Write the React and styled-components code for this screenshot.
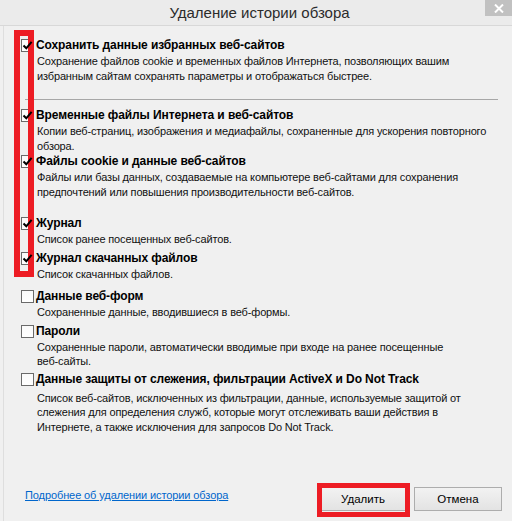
import React from "react";
import styled, { createGlobalStyle } from "styled-components";

const Global = createGlobalStyle`
  html, body { margin: 0; padding: 0; background: #f0f0f0; }
  body { font-family: "Liberation Sans", Arial, sans-serif; }
`;

const Window = styled.div`
  width: 512px;
  height: 521px;
  display: flex;
  flex-direction: column;
  background: #f0f0f0;
  overflow: hidden;
  position: relative;
`;

const TitleBar = styled.div`
  height: 25px;
  background: #ebebeb;
  border-bottom: 1px solid #d8d8d8;
  display: flex;
  align-items: center;
  justify-content: center;
  position: relative;
  flex-shrink: 0;
`;

const Title = styled.div`
  font-family: "Liberation Sans", Arial, sans-serif;
  font-size: 15px;
  color: #2b2b2b;
  padding-left: 7px;
  line-height: 25px;
`;

const CloseButton = styled.div`
  position: absolute;
  top: 0;
  right: 0;
  width: 27px;
  height: 16px;
  background: #c1c1c1;
  display: flex;
  align-items: center;
  justify-content: center;
`;

const Body = styled.div`
  flex: 1;
  display: flex;
  flex-direction: column;
  margin-left: 3px;
  border-left: 1px solid #dedede;
  padding: 11px 10px 10px 17px;
  position: relative;
`;

const Item = styled.div`
  display: flex;
  margin-top: ${(p) => p.$top || 0}px;
`;

const BoxCol = styled.div`
  width: 15px;
  flex-shrink: 0;
  padding-top: 2px;
`;

const Box = styled.div`
  width: 11px;
  height: 11px;
  border: 1px solid #6a6a6a;
  background: linear-gradient(#fafafa, #ffffff);
  display: flex;
  align-items: center;
  justify-content: center;
`;

const Check = styled.svg`
  position: relative;
  z-index: 3;
`;

const TextCol = styled.div`
  display: flex;
  flex-direction: column;
`;

const ItemTitle = styled.div`
  font-size: 12px;
  letter-spacing: -0.1px;
  font-weight: bold;
  color: #000;
  line-height: 16px;
  white-space: nowrap;
`;

const Desc = styled.div`
  font-size: 11px;
  letter-spacing: -0.15px;
  color: #111;
  line-height: 14.5px;
  margin-top: ${(p) => 1 + (p.$extra || 0)}px;
  padding-left: 1px;
  width: ${(p) => p.$width || 470}px;
`;

const Separator = styled.div`
  height: 1px;
  background: #a7a7a7;
  margin: 16px 0 7px 4px;
  width: 473px;
`;

const RedFrame = styled.div`
  position: absolute;
  left: 10px;
  top: 4px;
  width: 8px;
  height: 235px;
  border: 6px solid #ed1c24;
  z-index: 2;
`;

const Footer = styled.div`
  margin-top: auto;
  display: flex;
  align-items: flex-start;
  padding-left: 4px;
`;

const HelpLink = styled.a`
  font-size: 11px;
  letter-spacing: -0.1px;
  color: #0066cc;
  text-decoration: underline;
  line-height: 16px;
  cursor: pointer;
`;

const Buttons = styled.div`
  margin-left: auto;
  display: flex;
  gap: 7px;
`;

const Highlight = styled.div`
  position: relative;
`;

const HighlightFrame = styled.div`
  position: absolute;
  left: -2px;
  right: -3px;
  top: -4px;
  bottom: -6px;
  border: 5px solid #ed1c24;
  pointer-events: none;
`;

const Button = styled.button`
  width: 88px;
  height: 24px;
  border: 1px solid #adadad;
  background: linear-gradient(#f2f2f2, #e3e3e3);
  font-family: "Liberation Sans", Arial, sans-serif;
  font-size: 11.5px;
  color: #000;
  padding: 0;
`;

const CheckMark = () => (
  <Check width="11" height="11" viewBox="0 0 11 11">
    <path d="M1.5 5.5 L4.3 8.3 L9.6 1.8" fill="none" stroke="#000" strokeWidth="2" />
  </Check>
);

const Option = ({ checked, top, title, desc, extra, width }) => (
  <Item $top={top}>
    <BoxCol>
      <Box>{checked && <CheckMark />}</Box>
    </BoxCol>
    <TextCol>
      <ItemTitle>{title}</ItemTitle>
      <Desc $extra={extra} $width={width}>{desc}</Desc>
    </TextCol>
  </Item>
);

export default function App() {
  return (
    <>
      <Global />
      <Window>
        <TitleBar>
          <Title>Удаление истории обзора</Title>
          <CloseButton>
            <svg width="10" height="9" viewBox="0 0 10 9">
              <path d="M1 0.5 L9 8.5 M9 0.5 L1 8.5" stroke="#fff" strokeWidth="2" />
            </svg>
          </CloseButton>
        </TitleBar>
        <Body>
          <RedFrame />
          <Option
            checked
            title="Сохранить данные избранных веб-сайтов"
            desc="Сохранение файлов cookie и временных файлов Интернета, позволяющих вашим избранным сайтам сохранять параметры и отображаться быстрее."
            width={430}
          />
          <Separator />
          <Option
            checked
            title="Временные файлы Интернета и веб-сайтов"
            desc="Копии веб-страниц, изображения и медиафайлы, сохраненные для ускорения повторного обзора."
            width={466}
          />
          <Option
            checked
            title="Файлы cookie и данные веб-сайтов"
            desc="Файлы или базы данных, создаваемые на компьютере веб-сайтами для сохранения предпочтений или повышения производительности веб-сайтов."
            width={450}
          />
          <Option checked top={16} title="Журнал" desc="Список ранее посещенных веб-сайтов." />
          <Option checked top={3} title="Журнал скачанных файлов" desc="Список скачанных файлов." />
          <Option top={7} title="Данные веб-форм" desc="Сохраненные данные, вводившиеся в веб-формы." />
          <Option
            top={3}
            title="Пароли"
            desc="Сохраненные пароли, автоматически вводимые при входе на ранее посещенные веб-сайты."
            width={430}
          />
          <Option
            top={2}
            title="Данные защиты от слежения, фильтрации ActiveX и Do Not Track"
            desc="Список веб-сайтов, исключенных из фильтрации, данные, используемые защитой от слежения для определения служб, которые могут отслеживать ваши действия в Интернете, а также исключения для запросов Do Not Track."
            extra={3}
            width={450}
          />
          <Footer>
            <HelpLink>Подробнее об удалении истории обзора</HelpLink>
            <Buttons>
              <Highlight>
                <Button>Удалить</Button>
                <HighlightFrame />
              </Highlight>
              <Button>Отмена</Button>
            </Buttons>
          </Footer>
        </Body>
      </Window>
    </>
  );
}
